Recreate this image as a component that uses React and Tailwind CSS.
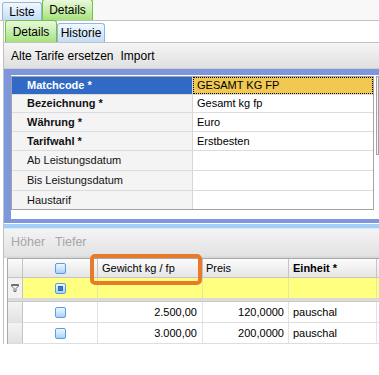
import React from "react";

const propRows = [
  { label: "Matchcode *", value: "GESAMT KG FP", bold: true, h: "h-[18px]", selected: true },
  { label: "Bezeichnung *", value: "Gesamt kg fp", bold: true, h: "h-[18px]" },
  { label: "Währung *", value: "Euro", bold: true, h: "h-[19px]" },
  { label: "Tarifwahl *", value: "Erstbesten", bold: true, h: "h-[19px]" },
  { label: "Ab Leistungsdatum", value: "", h: "h-[20px]" },
  { label: "Bis Leistungsdatum", value: "", h: "h-[20px]" },
  { label: "Haustarif", value: "", h: "h-[18px]", last: true },
];

const dataRows = [
  { gewicht: "2.500,00", preis: "120,0000", einheit: "pauschal" },
  { gewicht: "3.000,00", preis: "200,0000", einheit: "pauschal" },
];

function Check({ mixed }) {
  return (
    <div className="w-[11px] h-[11px] rounded-[2px] border border-[#5a9ce2] bg-linear-to-b from-[#eef7ff] to-[#a8d2f6] flex items-center justify-center">
      {mixed && <div className="w-[5px] h-[5px] bg-[#3f78cc] border border-[#2f63b5]" />}
    </div>
  );
}

function Funnel() {
  return (
    <svg width="8" height="8" viewBox="0 0 8 8">
      <path d="M0.5 0.5 H7.5 V2 L5 4.5 V7.5 H3 V4.5 L0.5 2 Z" fill="none" stroke="#6f6f6f" strokeWidth="1" />
      <path d="M1 1.5 H7" stroke="#6f6f6f" strokeWidth="1" />
    </svg>
  );
}

export default function App() {
  return (
    <div className="w-[379px] h-[375px] overflow-hidden bg-white relative text-black font-['Liberation_Sans',Arial,sans-serif]">
      {/* onglets du haut */}
      <div className="h-[21px] bg-[#f8f8f8] border-b border-[#c2c2c2] flex items-end pl-[2px] text-[12px]">
        <div className="w-[40px] h-[18px] rounded-t-[3px] border border-b-0 border-[#8fb6de] bg-linear-to-b from-[#f2f8fe] to-[#c3ddf5] flex items-center justify-center">
          Liste
        </div>
        <div className="w-[51px] h-[21px] rounded-t-[3px] border border-b-0 border-[#74c04c] bg-linear-to-b from-[#e9f9dc] to-[#a6e27a] flex items-center justify-center">
          Details
        </div>
      </div>

      <div className="ml-[3px] border-l border-[#c0c0c0] flex flex-col">
        {/* onglets secondaires */}
        <div className="h-[22px] border-b border-[#c2c2c2] flex items-end pl-[1px] text-[12px]">
          <div className="w-[52px] h-[22px] rounded-t-[3px] border border-b-0 border-[#74c04c] bg-linear-to-b from-[#e9f9dc] to-[#a6e27a] flex items-center justify-center">
            Details
          </div>
          <div className="w-[48px] h-[19px] rounded-t-[3px] border border-b-0 border-[#8fb6de] bg-linear-to-b from-[#f2f8fe] to-[#c3ddf5] flex items-center justify-center">
            Historie
          </div>
        </div>

        {/* barre d'outils */}
        <div className="h-[26px] bg-linear-to-b from-[#f5f5f5] to-[#e0e0e0] border-b border-[#cfcfcf] flex items-center gap-[7px] pl-[7px] text-[12px]">
          <span>Alte Tarife ersetzen</span>
          <span>Import</span>
        </div>

        {/* cadre bleu + grille des propriétés */}
        <div className="bg-[#7e97dc] pt-[6px] pl-[7px] pb-[4px]">
          <div className="bg-white h-[144px] flex items-start gap-[2px] pt-[1px]">
            <div className="w-[363px] border border-[#a2a2a2] text-[11px]">
              {propRows.map((r) => (
                <div key={r.label} className={`${r.h} flex ${r.last ? "" : "border-b border-[#dcdcdc]"}`}>
                  <div
                    className={`w-[181px] border-r border-[#d6d6d6] pl-[15px] flex items-center ${
                      r.selected ? "bg-[#316ac5] text-white" : "bg-[#f4f4f4] text-[#111]"
                    } ${r.bold ? "font-bold" : ""}`}
                  >
                    {r.label}
                  </div>
                  <div className="flex-1 flex items-center">
                    {r.selected ? (
                      <div className="w-full h-full bg-[#f1c852] border border-dotted border-black pl-[3px] flex items-center">
                        {r.value}
                      </div>
                    ) : (
                      <span className="pl-[4px]">{r.value}</span>
                    )}
                  </div>
                </div>
              ))}
            </div>
            <div className="flex-1 h-[79px] border border-[#a2a2a2] bg-[#f4f4f4] flex flex-col">
              <div className="h-[18px] border-b border-[#dcdcdc]" />
              <div className="h-[18px] border-b border-[#dcdcdc]" />
              <div className="h-[19px] border-b border-[#dcdcdc]" />
            </div>
          </div>
        </div>

        {/* séparateur */}
        <div className="h-[1px] bg-white" />
        <div className="h-[4px] bg-[#a4cef6]" />
        <div className="h-[1px] bg-[#d6ebfb]" />

        {/* barre Höher / Tiefer */}
        <div className="h-[26px] bg-linear-to-b from-[#f4f4f4] to-[#e3e3e3] flex items-center gap-[10px] pl-[7px] text-[12.5px] text-[#a6a6a6]">
          <span>Höher</span>
          <span>Tiefer</span>
        </div>

        {/* grille des tarifs */}
        <div className="h-[3px] bg-linear-to-b from-[#e4e4e4] to-[#d4d4d4]" />
        <div className="ml-[3px] border-l border-t border-[#a9a9a9] text-[11px]">
          <div className="h-[19px] flex bg-linear-to-b from-[#fbfbfb] to-[#e6e6e6] border-b border-[#c4c4c4]">
            <div className="w-[15px] border-r border-[#c4c4c4]" />
            <div className="w-[75px] border-r border-[#c4c4c4] flex items-center justify-center">
              <Check />
            </div>
            <div className="w-[105px] border-r border-[#c4c4c4] flex items-center pl-[4px]">Gewicht kg / fp</div>
            <div className="w-[86px] border-r border-[#c4c4c4] flex items-center pl-[3px]">Preis</div>
            <div className="w-[88px] border-r border-[#c4c4c4] flex items-center pl-[4px] font-bold">Einheit *</div>
            <div className="flex-1" />
          </div>
          <div className="h-[21px] flex bg-[#ffff80] border-b border-[#d8d8d8]">
            <div className="w-[15px] bg-[#f2f2f2] border-r border-[#c4c4c4] flex items-center justify-center">
              <Funnel />
            </div>
            <div className="w-[75px] border-r border-[#e6e6a0] flex items-center justify-center">
              <Check mixed />
            </div>
            <div className="w-[105px] border-r border-[#e6e6a0]" />
            <div className="w-[86px] border-r border-[#e6e6a0]" />
            <div className="w-[88px] border-r border-[#e6e6a0]" />
            <div className="flex-1" />
          </div>
          <div className="h-[3px] bg-[#dcdcdc] border-b border-[#c8c8c8]" />
          {dataRows.map((r) => (
            <div key={r.gewicht} className="h-[21px] flex border-b border-[#dedede]">
              <div className="w-[15px] bg-linear-to-b from-[#f4f4f4] to-[#e2e2e2] border-r border-[#c4c4c4]" />
              <div className="w-[75px] border-r border-[#e2e2e2] flex items-center justify-center">
                <Check />
              </div>
              <div className="w-[105px] border-r border-[#e2e2e2] flex items-center justify-end pr-[5px]">{r.gewicht}</div>
              <div className="w-[86px] border-r border-[#e2e2e2] flex items-center justify-end pr-[4px]">{r.preis}</div>
              <div className="w-[88px] border-r border-[#e2e2e2] flex items-center pl-[4px]">{r.einheit}</div>
              <div className="flex-1" />
            </div>
          ))}
        </div>
      </div>

      {/* cadre orange de mise en évidence */}
      <div className="absolute left-[90px] top-[254px] w-[112px] h-[31px] border-4 border-[#e87a2c] rounded-[5px]" />
    </div>
  );
}
